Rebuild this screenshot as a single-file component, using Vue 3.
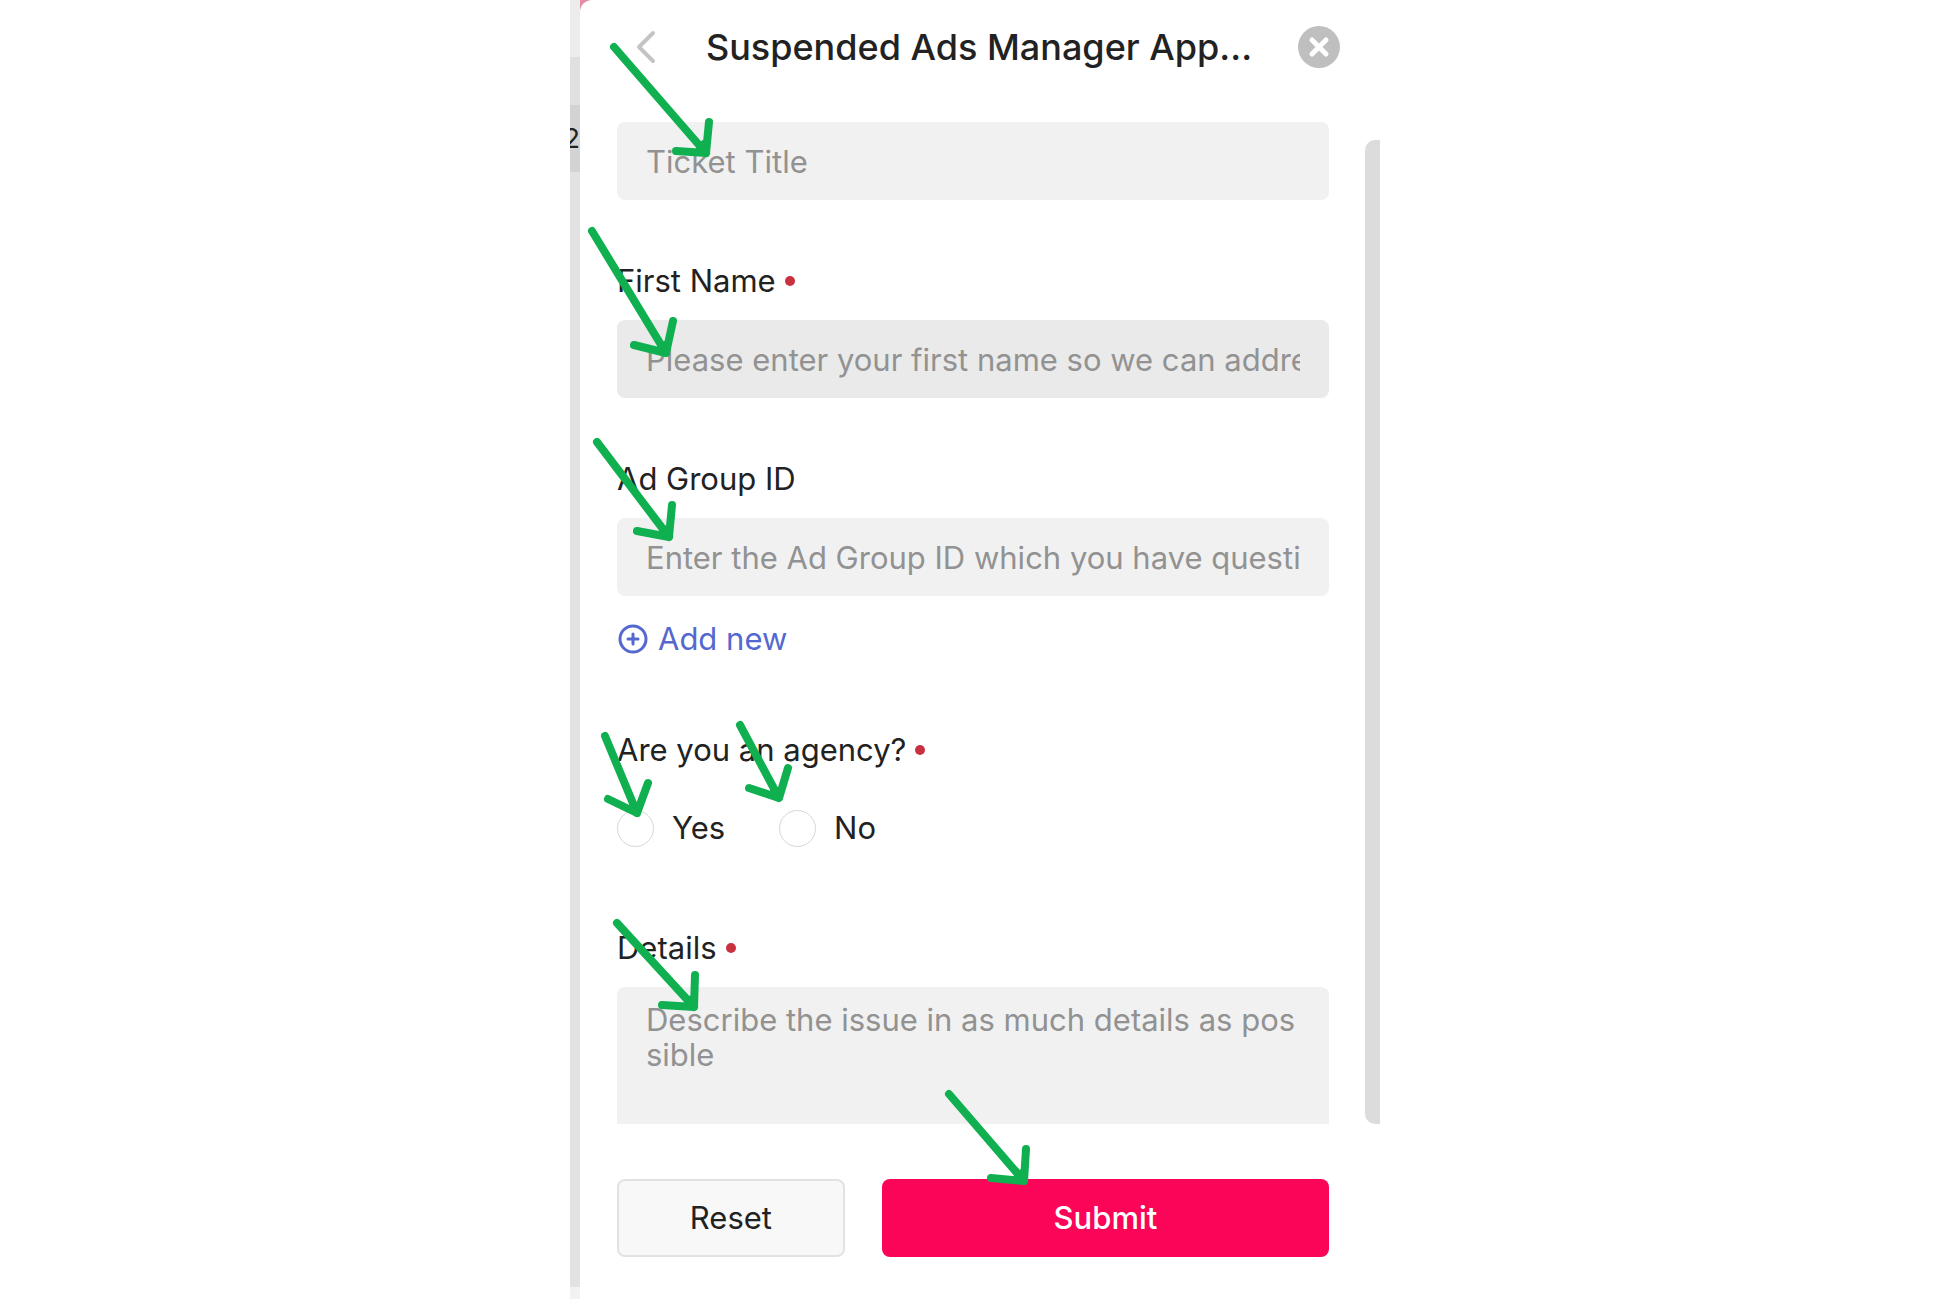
<template>
  <div class="stage">
    <div class="shot">
      <div class="backdrop" aria-hidden="true">
        <div class="band band-top"></div>
        <div class="band band-mid"></div>
        <div class="band band-row">2</div>
        <div class="band band-rest"></div>
        <div class="band band-end"></div>
      </div>

      <div class="panel-wrap">
        <form class="panel" @submit.prevent="handleSubmit" @reset="handleReset">
          <header class="panel-header">
            <button type="button" class="icon-btn" aria-label="Back">
              <svg width="24" height="36" viewBox="0 0 24 36">
                <path d="M17 4 L3 18 L17 32" fill="none" stroke="#c4c4c4" stroke-width="4" stroke-linecap="round" stroke-linejoin="round" />
              </svg>
            </button>
            <h1 class="panel-title">Suspended Ads Manager App...</h1>
            <button type="button" class="icon-btn" aria-label="Close">
              <svg width="42" height="42" viewBox="0 0 42 42">
                <circle cx="21" cy="21" r="21" fill="#bfbfbf" />
                <path d="M14 14 L28 28 M28 14 L14 28" stroke="#fff" stroke-width="5" stroke-linecap="round" />
              </svg>
            </button>
          </header>

          <div class="panel-body">
            <div class="fields">
              <input v-model="form.title" class="control" type="text" placeholder="Ticket Title" aria-label="Ticket Title">

              <div class="form-group">
                <label class="form-label" for="firstName">First Name <span class="required"></span></label>
                <input
                  id="firstName"
                  v-model="form.firstName"
                  class="control control-hover"
                  type="text"
                  placeholder="Please enter your first name so we can address you"
                >
              </div>

              <div class="form-group">
                <label class="form-label" for="adGroup0">Ad Group ID</label>
                <input
                  v-for="(id, i) in form.adGroups"
                  :id="'adGroup' + i"
                  :key="i"
                  v-model="form.adGroups[i]"
                  class="control"
                  type="text"
                  placeholder="Enter the Ad Group ID which you have questions about"
                >
                <button type="button" class="add-btn" @click="form.adGroups.push('')">
                  <svg width="31" height="31" viewBox="0 0 31 31" fill="none" stroke="#5468d0" stroke-width="3" stroke-linecap="round">
                    <circle cx="16" cy="15" r="13" />
                    <path d="M16 10 V20 M11 15 H21" />
                  </svg>
                  Add new
                </button>
              </div>

              <fieldset class="form-group">
                <legend class="form-label">Are you an agency? <span class="required"></span></legend>
                <div class="radio-row">
                  <label v-for="option in ['Yes', 'No']" :key="option" class="radio">
                    <input v-model="form.agency" type="radio" name="agency" :value="option">
                    {{ option }}
                  </label>
                </div>
              </fieldset>

              <div class="form-group">
                <label class="form-label" for="details">Details <span class="required"></span></label>
                <textarea
                  id="details"
                  v-model="form.details"
                  class="control control-area"
                  placeholder="Describe the issue in as much details as possible"
                ></textarea>
              </div>
            </div>
            <div class="scrollbar" aria-hidden="true"></div>
          </div>

          <footer class="panel-footer">
            <button type="reset" class="btn btn-reset">Reset</button>
            <button type="submit" class="btn btn-submit">Submit</button>
          </footer>
        </form>
      </div>

      <!-- hand-drawn arrows over the form -->
      <svg class="arrows" width="810" height="1299" viewBox="0 0 810 1299" aria-hidden="true">
        <path v-for="d in arrows" :key="d" :d="d" />
      </svg>
    </div>
  </div>
</template>

<script setup>
import { ref } from 'vue'

const emptyForm = () => ({
  title: '',
  firstName: '',
  adGroups: [''],
  agency: '',
  details: ''
})

const form = ref(emptyForm())

const arrows = [
  'M44 47 L136 153 M139 122 L136 153 L106 151 M130 147 L134 144',
  'M22 231 L96 353 M103 321 L96 353 L64 345 M91 347 L95 345',
  'M27 442 L99 537 M102 505 L99 537 L67 531 M93 531 L97 529',
  'M35 736 L67 813 M78 783 L67 813 L38 799 M63 807 L67 806',
  'M170 725 L209 798 M218 768 L209 798 L179 788 M204 792 L208 791',
  'M47 923 L124 1007 M125 975 L124 1007 L92 1005 M118 1002 L122 999',
  'M379 1094 L454 1181 M456 1149 L454 1181 L421 1178 M448 1176 L452 1173'
]

const handleReset = () => {
  form.value = emptyForm()
}

const handleSubmit = () => {
  if (!form.value.firstName.trim() || !form.value.agency || !form.value.details.trim()) {
    return
  }
  handleReset()
}
</script>

<style>
body {
  margin: 0;
  background: #fff;
}
</style>

<style scoped>
.stage {
  display: flex;
  justify-content: center;
  min-height: 100vh;
  font-family: Inter, "Liberation Sans", sans-serif;
  font-size: 31px;
  line-height: 40px;
  color: #222;
}

.shot {
  position: relative;
  display: flex;
  width: 100%;
  max-width: 810px;
}

.backdrop {
  display: flex;
  flex-direction: column;
  flex: 0 0 10px;
  width: 10px;
  overflow: hidden;
}

.band-top {
  height: 57px;
  background: #ececec;
}

.band-mid {
  height: 48px;
  background: #e0e0e0;
}

.band-row {
  display: flex;
  justify-content: flex-end;
  align-items: center;
  height: 67px;
  font-size: 27px;
  background: #d3d3d3;
}

.band-rest {
  flex: 1;
  background: #e2e2e2;
}

.band-end {
  height: 13px;
  background: #f2f2f2;
}

.panel-wrap {
  display: flex;
  flex: 1;
  min-width: 0;
  background: #e58ba3;
}

.panel {
  display: flex;
  flex-direction: column;
  flex: 1;
  min-width: 0;
  background: #fff;
  border-top-left-radius: 12px;
}

.panel-header {
  display: flex;
  align-items: center;
  height: 94px;
  padding: 0 40px 0 56px;
}

.panel-title {
  flex: 1;
  min-width: 0;
  margin: 0;
  overflow: hidden;
  font-size: 36px;
  font-weight: 500;
  line-height: 48px;
  text-align: center;
  white-space: nowrap;
}

.icon-btn {
  display: flex;
  padding: 0;
  border: none;
  background: none;
  cursor: pointer;
}

.panel-body {
  display: flex;
  gap: 36px;
  padding-left: 37px;
}

.fields {
  display: flex;
  flex: 1;
  flex-direction: column;
  gap: 61px;
  min-width: 0;
  padding-top: 28px;
}

.form-group {
  display: flex;
  flex-direction: column;
  gap: 19px;
  min-width: 0;
  margin: 0;
  padding: 0;
  border: none;
}

.form-label {
  display: flex;
  align-items: center;
  gap: 9px;
  padding: 0;
}

fieldset .form-label {
  margin-bottom: 19px;
}

.required {
  width: 10px;
  height: 10px;
  border-radius: 50%;
  background: #c93040;
}

.control {
  box-sizing: border-box;
  width: 100%;
  height: 78px;
  padding: 0 29px;
  border: none;
  border-radius: 8px;
  font: inherit;
  color: #222;
  background: #f1f1f1;
}

.control::placeholder {
  color: #929292;
  opacity: 1;
}

.control:focus {
  outline: none;
}

.control-hover,
.control:hover {
  background: #eaeaea;
}

.control-area {
  display: block;
  height: 137px;
  padding: 15px 29px;
  border-radius: 8px 8px 0 0;
  line-height: 35px;
  word-break: break-all;
  overflow: hidden;
  resize: none;
}

.add-btn {
  display: flex;
  align-items: center;
  align-self: flex-start;
  gap: 10px;
  margin: 4px 0 10px;
  padding: 0;
  border: none;
  font: inherit;
  color: #5468d0;
  background: none;
  cursor: pointer;
}

.radio-row {
  display: flex;
  align-items: center;
  gap: 54px;
  height: 78px;
}

.radio {
  display: flex;
  align-items: center;
  gap: 18px;
}

.radio input {
  width: 37px;
  height: 37px;
  margin: 0;
  appearance: none;
  border: 1px solid #d6d6d6;
  border-radius: 50%;
  background: #fff;
}

.radio input:checked {
  border: 11px solid #fa0558;
}

.scrollbar {
  flex: 0 0 15px;
  margin-top: 46px;
  border-radius: 10px 0 0 10px;
  background: #dcdcdc;
}

.panel-footer {
  display: grid;
  grid-template-columns: 32% 1fr;
  gap: 37px;
  padding: 55px 51px 43px 37px;
}

.btn {
  height: 78px;
  padding: 0;
  border: none;
  border-radius: 8px;
  font: inherit;
  cursor: pointer;
}

.btn-reset {
  border: 2px solid #e2e2e2;
  color: #222;
  background: #f8f8f8;
}

.btn-submit {
  color: #fff;
  font-weight: 500;
  background: #fa0558;
}

.arrows {
  position: absolute;
  top: 0;
  left: 0;
  fill: none;
  stroke: #10b050;
  stroke-width: 8;
  stroke-linecap: round;
  stroke-linejoin: round;
  pointer-events: none;
}
</style>
